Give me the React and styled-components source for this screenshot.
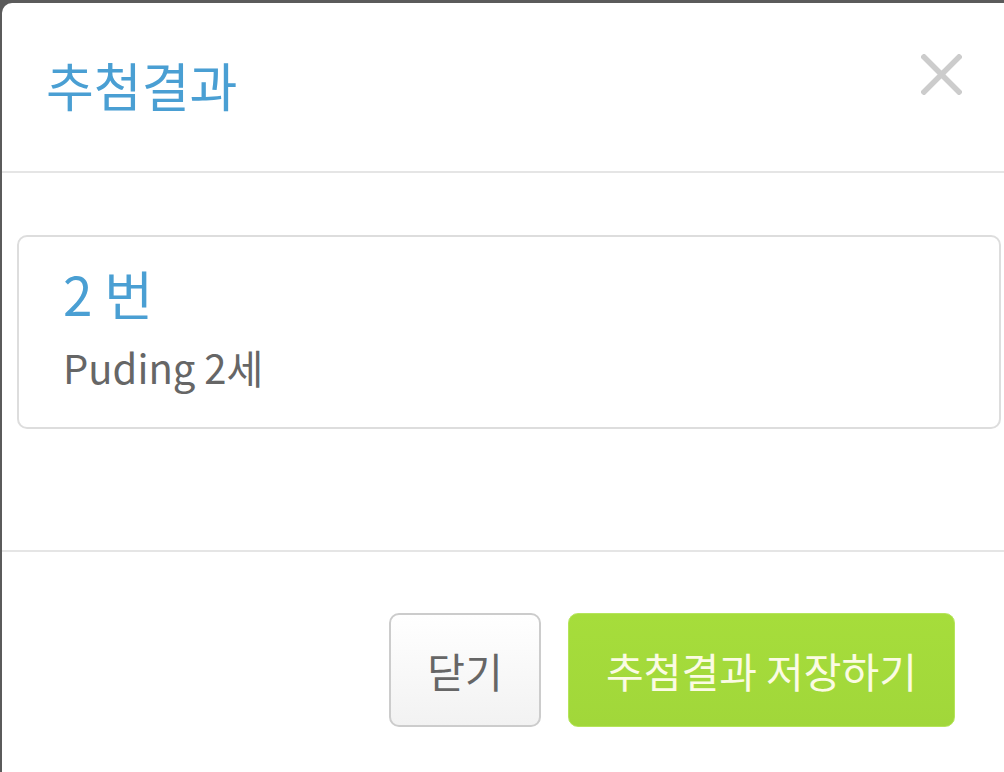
import React from "react";
import styled, { createGlobalStyle } from "styled-components";

const GlobalStyle = createGlobalStyle`
  html, body {
    margin: 0;
    padding: 0;
    background: #5b5b5b;
    overflow: hidden;
  }
  body {
    font-family: "Noto Sans CJK KR", "Noto Sans", sans-serif;
  }
`;

const Page = styled.div`
  width: 1004px;
  height: 772px;
  padding: 3px 0 0 2px;
  box-sizing: border-box;
  overflow: hidden;
`;

const Modal = styled.div`
  width: 1012px;
  height: 800px;
  background: #fff;
  border-radius: 10px 10px 0 0;
  display: flex;
  flex-direction: column;
`;

const Header = styled.div`
  height: 168px;
  display: flex;
  align-items: center;
  justify-content: space-between;
  padding: 0 52px 0 44px;
  border-bottom: 2px solid #e5e5e5;
`;

const Title = styled.h2`
  margin: 0 0 4px;
  font-size: 52px;
  font-weight: 400;
  color: #4a9fd3;
  line-height: 1.3;
`;

const CloseButton = styled.button`
  align-self: flex-start;
  margin-top: 51px;
  width: 41px;
  height: 41px;
  padding: 0;
  border: 0;
  background: none;
  cursor: pointer;
  svg {
    display: block;
  }
`;

const Body = styled.div`
  padding: 62px 13px 121px 15px;
  border-bottom: 2px solid #e5e5e5;
`;

const Card = styled.div`
  border: 2px solid #dddddd;
  border-radius: 10px;
  padding: 20px 44px 31px;
`;

const Number = styled.div`
  font-size: 53px;
  line-height: 72px;
  color: #4a9fd3;
`;

const Name = styled.div`
  margin-top: 9px;
  font-size: 40px;
  line-height: 58px;
  color: #666;
`;

const Footer = styled.div`
  display: flex;
  justify-content: flex-end;
  gap: 27px;
  padding: 61px 59px 0 0;
`;

const Button = styled.button`
  height: 114px;
  box-sizing: border-box;
  border-radius: 10px;
  font-family: "Noto Sans CJK KR", "Noto Sans", sans-serif;
  font-size: 41px;
  padding: 0;
  cursor: pointer;
  width: ${(p) => p.$width}px;
  ${(p) =>
    p.$primary
      ? `
    background: linear-gradient(#a6dd3b, #a1d73a);
    border: 1px solid #b5e55a;
    color: #fbfbe3;
  `
      : `
    background: linear-gradient(#ffffff, #f2f2f2);
    border: 2px solid #cccccc;
    color: #666;
  `}
`;

export default function App() {
  return (
    <Page>
      <GlobalStyle />
      <Modal>
        <Header>
          <Title>추첨결과</Title>
          <CloseButton aria-label="닫기">
            <svg width="41" height="41" viewBox="0 0 41 41">
              <path
                d="M3 3 L38 38 M38 3 L3 38"
                stroke="#cccccc"
                strokeWidth="5.5"
                strokeLinecap="square"
              />
            </svg>
          </CloseButton>
        </Header>
        <Body>
          <Card>
            <Number>2 번</Number>
            <Name>Puding 2세</Name>
          </Card>
        </Body>
        <Footer>
          <Button $width={152}>닫기</Button>
          <Button $width={387} $primary>
            추첨결과 저장하기
          </Button>
        </Footer>
      </Modal>
    </Page>
  );
}
